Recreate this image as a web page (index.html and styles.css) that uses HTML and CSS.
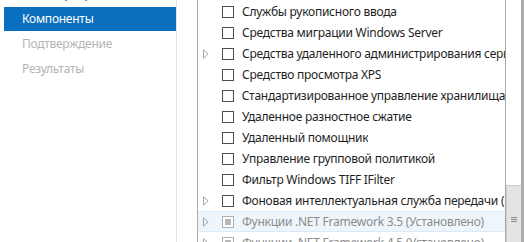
FILE: index.html
```html
<!DOCTYPE html>
<html>
<head>
<meta charset="utf-8">
<link rel="stylesheet" href="styles.css">
</head>
<body>
<div class="wizard">
  <nav class="nav">
    <div class="nav-item dim">Роли сервера</div>
    <div class="nav-item active">Компоненты</div>
    <div class="nav-item disabled">Подтверждение</div>
    <div class="nav-item disabled">Результаты</div>
  </nav>
  <div class="gap"></div>
  <div class="listbox">
    <div class="rows">
      <div class="row"><span class="exp"></span><span class="cb"></span><span class="label">Службы рукописного ввода</span></div>
      <div class="row"><span class="exp"></span><span class="cb"></span><span class="label">Средства миграции Windows Server</span></div>
      <div class="row"><span class="exp"><svg width="6" height="10" viewBox="0 0 6 10"><path d="M0.5 0.8 L5.2 5 L0.5 9.2 Z" fill="none" stroke="#a6a6a6" stroke-width="1"/></svg></span><span class="cb"></span><span class="label">Средства удаленного администрирования сервера</span></div>
      <div class="row"><span class="exp"></span><span class="cb"></span><span class="label">Средство просмотра XPS</span></div>
      <div class="row"><span class="exp"></span><span class="cb"></span><span class="label">Стандартизированное управление хранилищами</span></div>
      <div class="row"><span class="exp"></span><span class="cb"></span><span class="label">Удаленное разностное сжатие</span></div>
      <div class="row"><span class="exp"></span><span class="cb"></span><span class="label">Удаленный помощник</span></div>
      <div class="row"><span class="exp"></span><span class="cb"></span><span class="label">Управление групповой политикой</span></div>
      <div class="row"><span class="exp"></span><span class="cb"></span><span class="label">Фильтр Windows TIFF IFilter</span></div>
      <div class="row"><span class="exp"><svg width="6" height="10" viewBox="0 0 6 10"><path d="M0.5 0.8 L5.2 5 L0.5 9.2 Z" fill="none" stroke="#a6a6a6" stroke-width="1"/></svg></span><span class="cb"></span><span class="label">Фоновая интеллектуальная служба передачи (BITS)</span></div>
      <div class="row hover installed"><span class="exp"><svg width="6" height="10" viewBox="0 0 6 10"><path d="M0.5 0.8 L5.2 5 L0.5 9.2 Z" fill="none" stroke="#a6a6a6" stroke-width="1"/></svg></span><span class="cb partial"></span><span class="label">Функции .NET Framework 3.5 (Установлено)</span></div>
      <div class="row installed"><span class="exp"><svg width="6" height="10" viewBox="0 0 6 10"><path d="M0.5 0.8 L5.2 5 L0.5 9.2 Z" fill="none" stroke="#a6a6a6" stroke-width="1"/></svg></span><span class="cb partial"></span><span class="label">Функции .NET Framework 4.5 (Установлено)</span></div>
    </div>
    <div class="scrollbar">
      <div class="thumb"><span class="grip"></span></div>
    </div>
  </div>
</div>
</body>
</html>
```

FILE: styles.css
```css
html, body {
  margin: 0;
  padding: 0;
  background: #ffffff;
  overflow: hidden;
}
body {
  width: 524px;
  height: 242px;
  font-family: "Noto Sans", "Open Sans", sans-serif;
  font-size: 12px;
  letter-spacing: -0.25px;
}
.wizard {
  display: flex;
  height: 242px;
}
.nav {
  width: 172px;
  padding-left: 4px;
  border-right: 1px solid #e3e3e3;
  display: flex;
  flex-direction: column;
  gap: 1px;
  margin-top: -18px;
}
.nav-item {
  height: 24px;
  line-height: 24px;
  padding-left: 18px;
  color: #1e1e1e;
  white-space: nowrap;
}
.nav-item.active {
  background: #0b6fbf;
  color: #ffffff;
}
.nav-item.disabled {
  color: #b4b4b4;
}
.gap {
  width: 20px;
}
.listbox {
  flex: 1;
  display: flex;
  border-left: 1px solid #a9a9a9;
  overflow: hidden;
}
.rows {
  flex: 1;
  min-width: 0;
  padding-top: 1px;
  border-right: 1px solid #a9a9a9;
  overflow: hidden;
}
.row {
  display: flex;
  align-items: center;
  height: 21px;
  white-space: nowrap;
  color: #1e1e1e;
  box-sizing: border-box;
}
.exp {
  width: 6px;
  height: 10px;
  margin-left: 5px;
  margin-right: 13px;
  display: flex;
}
.cb {
  width: 10px;
  height: 10px;
  border: 1px solid #4d4d4d;
  margin-right: 8px;
  flex: none;
  display: flex;
  align-items: center;
  justify-content: center;
}
.label {
  overflow: hidden;
}
.row.hover {
  background: #eef6fc;
  border-top: 1px solid #d8eaf8;
  border-bottom: 1px solid #d8eaf8;
}
.row.installed {
  color: #8c8c8c;
}
.cb.partial {
  border-color: #b0b0b0;
  background: #ffffff;
}
.cb.partial::after {
  content: "";
  width: 6px;
  height: 6px;
  background: #b8b8b8;
}
.scrollbar {
  width: 15px;
  border-right: 3px solid #ababab;
  display: flex;
  flex-direction: column;
  justify-content: flex-end;
}
.thumb {
  height: 58px;
  margin-bottom: -1px;
  background: #e4e4e4;
  border: 1px solid #cdcdcd;
  border-right: none;
  display: flex;
  justify-content: center;
  padding-top: 31px;
  box-sizing: border-box;
}
.grip {
  width: 6px;
  height: 5px;
  border-top: 1px solid #8a8a8a;
  border-bottom: 1px solid #8a8a8a;
  position: relative;
  box-sizing: border-box;
}
.grip::after {
  content: "";
  position: absolute;
  left: 0;
  right: 0;
  top: 1px;
  border-top: 1px solid #8a8a8a;
}
```
